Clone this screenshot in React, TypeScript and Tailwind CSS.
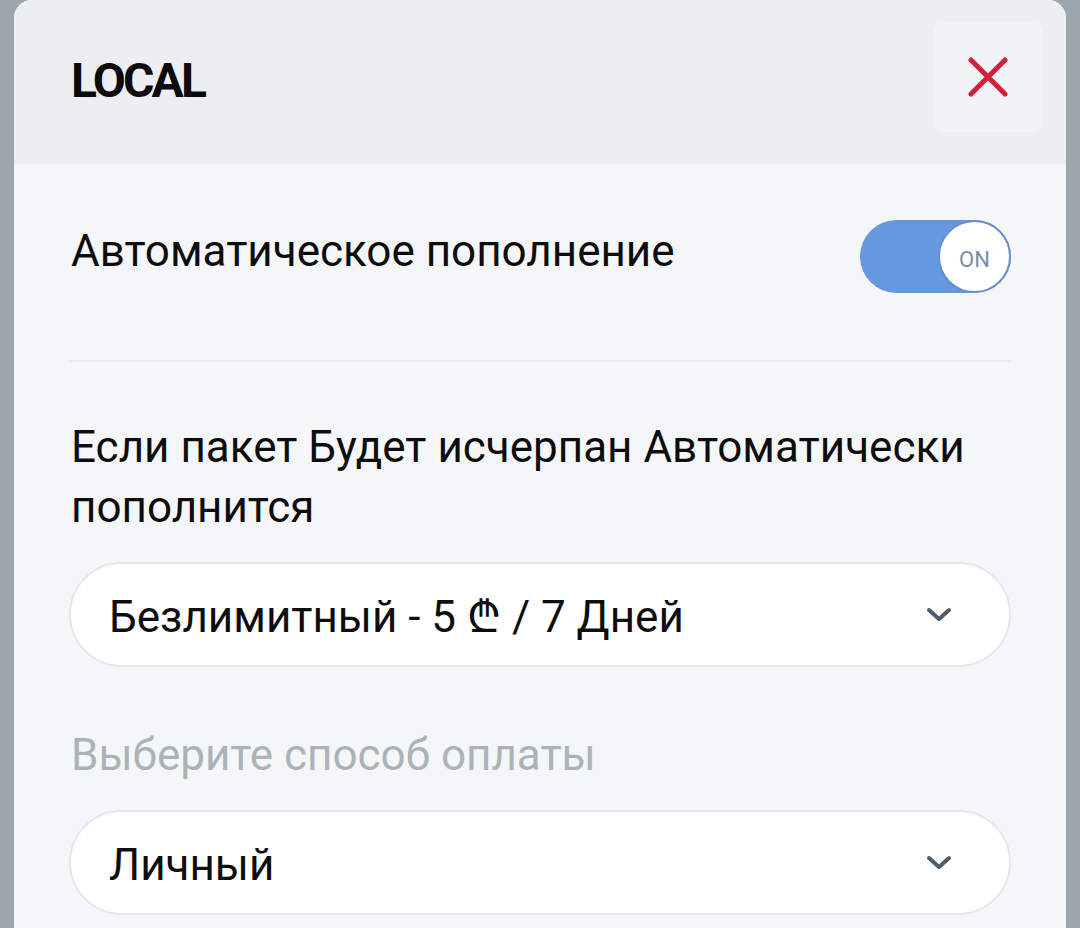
import React from "react";

function Chevron() {
  return (
    <svg width="28" height="16" viewBox="0 0 28 16" fill="none">
      <path d="M4 3 L14 12 L24 3" stroke="#4d5d6c" strokeWidth="4" strokeLinecap="round" strokeLinejoin="round" />
    </svg>
  );
}

function Select({ label }: { label: string }) {
  return (
    <div className="flex h-[105px] items-center justify-between rounded-full border-2 border-[#e4e6e9] bg-white pl-[38px] pr-[56px]">
      <span className="pt-[4px] text-[44px] text-[#0d0d0d]">{label}</span>
      <Chevron />
    </div>
  );
}

export default function App() {
  return (
    <div className="h-[928px] w-[1080px] overflow-hidden bg-[#9ba6ae] px-[14px]" style={{ fontFamily: "Roboto, 'DejaVu Sans', sans-serif" }}>
      <div className="h-full overflow-hidden rounded-t-[18px] bg-[#f5f6f8]">
        <div className="flex h-[164px] items-start justify-between bg-[#eceef1] pl-[57px] pr-[23px] pt-[22px]">
          <h1 className="mt-[35px] text-[48px] font-bold leading-none tracking-[-2.8px] text-[#0b0b0b]">LOCAL</h1>
          <button className="flex h-[110px] w-[110px] items-center justify-center rounded-[12px] bg-[#f1f2f4]">
            <svg width="40" height="40" viewBox="0 0 40 40">
              <path d="M3 3 L37 37 M37 3 L3 37" stroke="#d41f3a" strokeWidth="5" strokeLinecap="round" />
            </svg>
          </button>
        </div>
        <div className="px-[55px] pt-[56px]">
          <div className="flex items-start justify-between pl-[2px]">
            <span className="mt-[5px] text-[44px] leading-[52px] text-[#0d0d0d]">Автоматическое пополнение</span>
            <div className="flex h-[73px] w-[151px] items-center justify-end rounded-full bg-[#6499e0]">
              <div className="flex h-[73px] w-[73px] items-center justify-center rounded-full border-2 border-[#6a8fc6] bg-white pt-[6px] text-[22px] text-[#7a8ea8]">ON</div>
            </div>
          </div>
          <div className="mt-[67px] h-[2px] bg-[#e9ebee]" />
          <p className="mt-[55px] pl-[2px] text-[44px] leading-[60px] text-[#0d0d0d]">Если пакет Будет исчерпан Автоматически пополнится</p>
          <div className="mt-[25px]">
            <Select label="Безлимитный - 5 ₾ / 7 Дней" />
          </div>
          <p className="mt-[58px] pl-[2px] text-[44px] leading-[60px] text-[#abb3b9]">Выберите способ оплаты</p>
          <div className="mt-[25px]">
            <Select label="Личный" />
          </div>
        </div>
      </div>
    </div>
  );
}
